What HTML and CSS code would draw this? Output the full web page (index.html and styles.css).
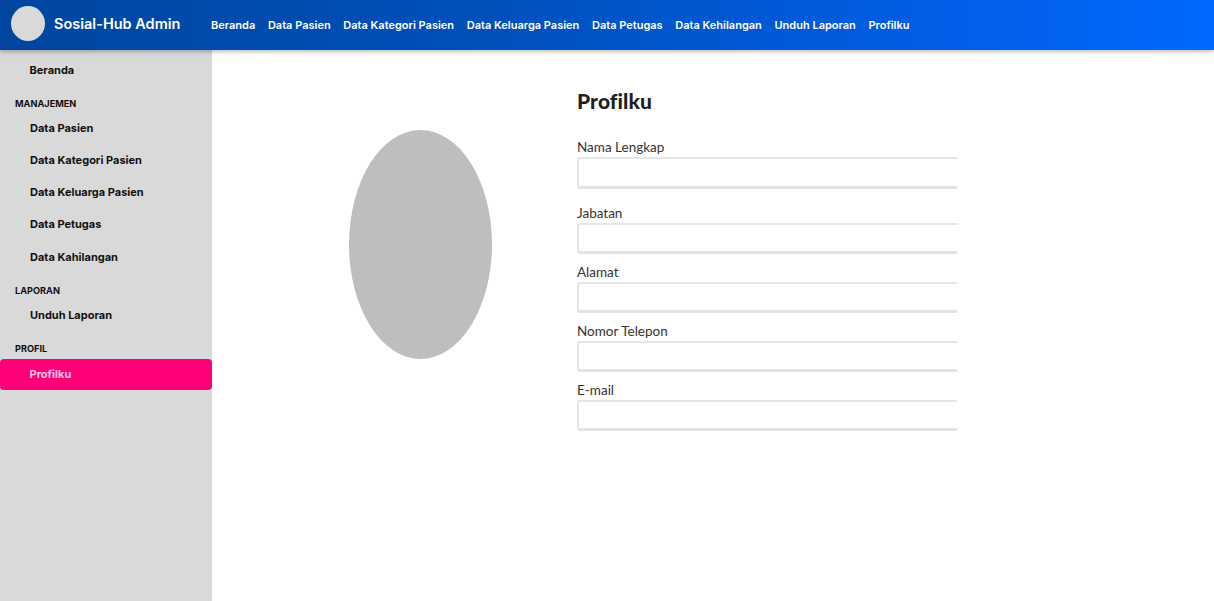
FILE: index.html
```html
<!DOCTYPE html>
<html>
<head>
  <meta charset="UTF-8">
  <title>Sosial-Hub Admin</title>
  <link rel="stylesheet" href="styles.css">
</head>
<body>
<header class="topbar">
  <div class="brand">
    <div class="brand-logo"></div>
    <span class="brand-name">Sosial-Hub Admin</span>
  </div>
  <nav class="topnav">
    <a>Beranda</a>
    <a>Data Pasien</a>
    <a>Data Kategori Pasien</a>
    <a>Data Keluarga Pasien</a>
    <a>Data Petugas</a>
    <a>Data Kehilangan</a>
    <a>Unduh Laporan</a>
    <a>Profilku</a>
  </nav>
</header>
<div class="page">
  <aside class="sidebar">
    <a class="side-link side-first">Beranda</a>
    <h6 class="side-title title-manajemen">MANAJEMEN</h6>
    <a class="side-link">Data Pasien</a>
    <a class="side-link">Data Kategori Pasien</a>
    <a class="side-link">Data Keluarga Pasien</a>
    <a class="side-link">Data Petugas</a>
    <a class="side-link">Data Kahilangan</a>
    <h6 class="side-title title-laporan">LAPORAN</h6>
    <a class="side-link">Unduh Laporan</a>
    <h6 class="side-title title-profil">PROFIL</h6>
    <a class="side-link side-active">Profilku</a>
  </aside>
  <main class="content">
    <div class="avatar"></div>
    <form class="profile">
      <h2 class="profile-title">Profilku</h2>
      <label class="field field-first">Nama Lengkap<input type="text"></label>
      <label class="field field-second">Jabatan<input type="text"></label>
      <label class="field">Alamat<input type="text"></label>
      <label class="field">Nomor Telepon<input type="text"></label>
      <label class="field">E-mail<input type="text"></label>
    </form>
  </main>
</div>
</body>
</html>
```
FILE: styles.css
```css
* { box-sizing: border-box; }
body {
  margin: 0;
  padding: 0;
  height: 601px;
  overflow: hidden;
  background: #fff;
  font-family: Inter, "Liberation Sans", sans-serif;
}

/* top bar */
.topbar {
  position: relative;
  display: flex;
  align-items: center;
  height: 50px;
  background: linear-gradient(90deg, #00469f 0%, #0050bb 40%, #0068ff 100%);
  box-shadow: 0 2px 4px rgba(0, 0, 0, .25);
  color: #fff;
}
.brand {
  display: flex;
  align-items: center;
  width: 211px;
  padding: 0 0 4px 11px;
}
.brand-logo {
  width: 34px;
  height: 35px;
  border-radius: 50%;
  background: #d9d9d9;
}
.brand-name {
  margin-left: 9px;
  font-size: 14.5px;
  font-weight: 600;
  white-space: nowrap;
}
.topnav {
  display: flex;
  gap: 12.65px;
  font-size: 11px;
  font-weight: 600;
  white-space: nowrap;
}

/* sidebar */
.page {
  display: flex;
  height: 551px;
}
.sidebar {
  width: 212px;
  flex: none;
  padding-top: 10px;
  background: #d9d9d9;
  color: #111;
}
.side-link {
  display: block;
  height: 32.25px;
  padding-left: 30px;
  font-size: 11px;
  font-weight: 700;
  line-height: 32px;
}
.side-first {
  height: 20px;
  line-height: 20px;
  padding-left: 29.5px;
}
.side-title {
  margin: 8.5px 0 0;
  height: 17px;
  padding-left: 15px;
  font-size: 9.2px;
  font-weight: 700;
  line-height: 17px;
}
.title-manajemen { margin-top: 14.5px; }
.title-laporan { margin-top: 9.5px; }
.title-profil {
  margin: 8.5px 0 1.5px;
  line-height: 18px;
}
.side-active {
  height: 31px;
  padding-left: 29.5px;
  line-height: 31px;
  border-radius: 4px;
  background: #ff0078;
  color: #ffc6e8;
}

/* main */
.content {
  flex: 1;
  display: flex;
  align-items: flex-start;
  padding: 80px 0 0 137px;
}
.avatar {
  width: 143px;
  height: 229px;
  border-radius: 50%;
  background: #bebebe;
}
.profile {
  width: 380px;
  margin: -42px 0 0 85px;
  font-family: Lato, "Liberation Sans", sans-serif;
  color: #333;
}
.profile-title {
  margin: 0;
  height: 26px;
  font-size: 21px;
  font-weight: 900;
  line-height: 26px;
  letter-spacing: .1px;
  color: #1f1f1f;
  font-variant-ligatures: none;
}
.field {
  display: block;
  margin-top: 9px;
  font-size: 13.5px;
  line-height: 19px;
}
.field-first { margin-top: 24px; }
.field-second { margin-top: 15px; }
.field input {
  display: block;
  width: 100%;
  height: 31px;
  margin: 0;
  padding: 0 8px;
  border: 0;
  border-top: 2px solid #e4e6e5;
  border-left: 2px solid #e4e6e5;
  border-bottom: 3px solid #e1e4e3;
  border-radius: 3px 0 0 3px;
  background: #fff;
  outline: 0;
}
.field-first input { height: 32px; }
```
